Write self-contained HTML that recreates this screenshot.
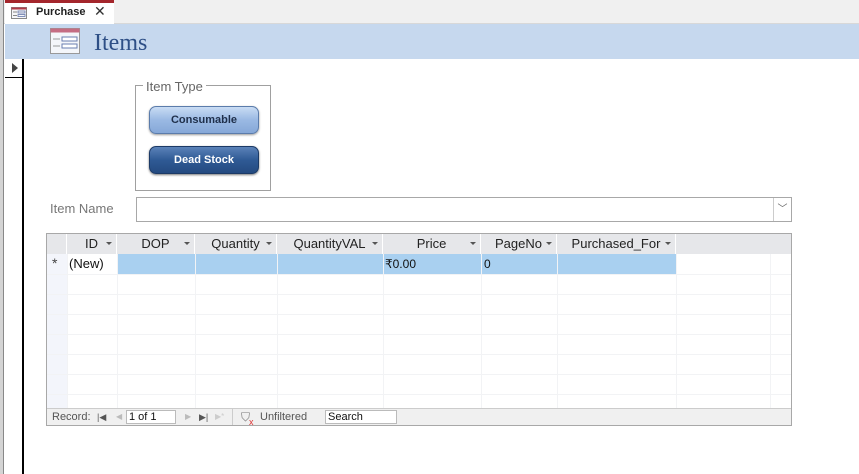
<!DOCTYPE html>
<html><head><style>
*{margin:0;padding:0;box-sizing:border-box}
body{width:859px;height:474px;overflow:hidden;background:#fff;font-family:"Liberation Sans","DejaVu Sans",sans-serif;position:relative}
.a{position:absolute}
.hc{position:absolute;top:0;height:20px;border-right:1px solid #fff;font-size:13px;color:#222;line-height:20px;text-align:center;background:#e6e7ea}
.dd{position:absolute;right:4px;top:8px;width:0;height:0;border-left:3px solid transparent;border-right:3px solid transparent;border-top:3px solid #555}
.vl{position:absolute;top:20px;bottom:17px;width:1px;background:#f2f3f5}
.hl{position:absolute;left:0;right:0;height:1px;background:#f2f3f5}
.btn{position:absolute;left:149px;width:110px;height:28px;border-radius:7px;font-size:11px;font-weight:bold;text-align:center;line-height:27px}
</style></head><body>
<div class="a" style="left:0;top:0;width:859px;height:24px;background:#f0f0f0;border-bottom:1px solid #d8d8d8"></div>
<div class="a" style="left:0;top:0;width:4px;height:474px;background:#d4d4d4;border-right:1px solid #888"></div>
<div class="a" style="left:5px;top:0;width:109px;height:24px;background:#fff;border-top:3px solid #a4262c"></div>
<svg class="a" style="left:11px;top:7px" width="16" height="12"><rect x="0.5" y="0.5" width="15" height="11" fill="#f6f6f8" stroke="#888"/><rect x="0.5" y="0.5" width="15" height="2" fill="#b23a48"/><rect x="7" y="4" width="7" height="2" fill="none" stroke="#6677aa" stroke-width="0.8"/><rect x="7" y="7.5" width="7" height="2" fill="none" stroke="#6677aa" stroke-width="0.8"/><line x1="2" y1="5" x2="6" y2="5" stroke="#888"/><line x1="2" y1="8.5" x2="6" y2="8.5" stroke="#888"/></svg>
<div class="a" style="left:36px;top:6px;font-size:11px;font-weight:bold;color:#222">Purchase</div>
<div class="a" style="left:94px;top:3px;font-size:14px;color:#333">✕</div>
<div class="a" style="left:5px;top:24px;width:854px;height:35px;background:#c6d8ee"></div>
<svg class="a" style="left:50px;top:28px" width="30" height="27"><rect x="0.5" y="0.5" width="29" height="25" fill="#f4f6fa" stroke="#999"/><rect x="0.5" y="0.5" width="29" height="4" fill="#c56d83"/><rect x="12" y="9" width="15" height="4" fill="#fff" stroke="#6a7fb0"/><rect x="12" y="16" width="15" height="4" fill="#fff" stroke="#6a7fb0"/><line x1="3" y1="11" x2="10" y2="11" stroke="#999"/><line x1="3" y1="18" x2="10" y2="18" stroke="#999"/></svg>
<div class="a" style="left:94px;top:30px;font-family:'Liberation Serif',serif;font-size:24px;color:#2e4f86">Items</div>
<div class="a" style="left:5px;top:59px;width:19px;height:415px;border-right:2px solid #000"></div>
<div class="a" style="left:5px;top:59px;width:19px;height:19px;border-bottom:1px solid #000"></div>
<div class="a" style="left:12px;top:63px;width:0;height:0;border-top:5px solid transparent;border-bottom:5px solid transparent;border-left:6px solid #444"></div>

<div class="a" style="left:135px;top:85px;width:136px;height:106px;border:1px solid #a0a0a0"></div>
<div class="a" style="left:143px;top:79px;padding:0 3px;background:#fff;font-size:13px;color:#666">Item Type</div>
<div class="btn" style="top:106px;background:linear-gradient(#c9dcf4,#9ab9e3 50%,#86a8d8);border:1px solid #5b7cab;color:#1f2f4a;box-shadow:0 1px 2px #999">Consumable</div>
<div class="btn" style="top:146px;background:linear-gradient(#5b82b8,#2f5a95 50%,#244a80);border:1px solid #1c3a66;color:#fff;box-shadow:0 1px 2px #777">Dead Stock</div>

<div class="a" style="left:50px;top:201px;font-size:13px;color:#777">Item Name</div>
<div class="a" style="left:136px;top:197px;width:656px;height:25px;border:1px solid #a8a8a8"></div>
<div class="a" style="left:773px;top:198px;width:18px;height:23px;border-left:1px solid #ccc;font-size:10px;color:#666;text-align:center;line-height:23px">﹀</div>

<div class="a" style="left:46px;top:233px;width:746px;height:193px;border:1px solid #a8a8a8;overflow:hidden">
 <div class="a" style="left:0;top:0;width:744px;height:20px;background:#e6e7ea"></div>
 <div class="hc" style="left:0;width:20px"></div>
 <div class="hc" style="left:20px;width:50px">ID<i class="dd"></i></div>
 <div class="hc" style="left:70px;width:78px">DOP<i class="dd"></i></div>
 <div class="hc" style="left:148px;width:82px">Quantity<i class="dd"></i></div>
 <div class="hc" style="left:230px;width:106px">QuantityVAL<i class="dd"></i></div>
 <div class="hc" style="left:336px;width:98px">Price<i class="dd"></i></div>
 <div class="hc" style="left:434px;width:76px">PageNo<i class="dd"></i></div>
 <div class="hc" style="left:510px;width:119px">Purchased_For<i class="dd"></i></div>
 <div class="a" style="left:0;top:20px;width:20px;height:154px;background:#f3f5fb"></div>
 <div class="a" style="left:70px;top:20px;width:559px;height:20px;background:#a9d0f0"></div>
 <div class="a" style="left:20px;top:20px;width:50px;height:20px;background:#fff"></div>
 <div class="a" style="left:5px;top:21px;font-size:14px;color:#444">*</div>
 <div class="a" style="left:22px;top:22px;font-size:13px;color:#111">(New)</div>
 <div class="a" style="left:338px;top:23px;font-size:12px;color:#111">₹0.00</div>
 <div class="a" style="left:437px;top:23px;font-size:12px;color:#111">0</div>
 <div class="vl" style="left:20px"></div><div class="vl" style="left:70px"></div><div class="vl" style="left:148px"></div><div class="vl" style="left:230px"></div><div class="vl" style="left:336px"></div><div class="vl" style="left:434px"></div><div class="vl" style="left:510px"></div><div class="vl" style="left:629px"></div><div class="vl" style="left:723px"></div>
 <div class="hl" style="top:40px"></div><div class="hl" style="top:60px"></div><div class="hl" style="top:80px"></div><div class="hl" style="top:100px"></div><div class="hl" style="top:120px"></div><div class="hl" style="top:140px"></div><div class="hl" style="top:160px"></div>
 <div class="a" style="left:0;top:174px;width:744px;height:17px;background:#f0f0f0;border-top:1px solid #ccc;font-size:11px;color:#555;line-height:16px">
  <span class="a" style="left:5px">Record:</span>
  <span class="a" style="left:50px;font-size:9px">|◀</span>
  <span class="a" style="left:69px;font-size:8px;color:#bbb">◀</span>
  <span class="a" style="left:79px;top:1px;width:50px;height:14px;background:#fff;border:1px solid #bbb;line-height:12px;padding-left:2px;color:#111">1 of 1</span>
  <span class="a" style="left:138px;font-size:8px;color:#bbb">▶</span>
  <span class="a" style="left:152px;font-size:9px">▶|</span>
  <span class="a" style="left:168px;font-size:8px;color:#ccc">▶*</span>
  <span class="a" style="left:185px;top:0;width:1px;height:16px;background:#ccc"></span>
  <span class="a" style="left:194px;font-size:12px;color:#777">⛉</span>
  <span class="a" style="left:202px;top:5px;font-size:9px;color:#d33">x</span>
  <span class="a" style="left:213px">Unfiltered</span>
  <span class="a" style="left:278px;top:1px;width:72px;height:14px;background:#fff;border:1px solid #bbb;line-height:12px;padding-left:2px;color:#111">Search</span>
 </div>
</div>
</body></html>
